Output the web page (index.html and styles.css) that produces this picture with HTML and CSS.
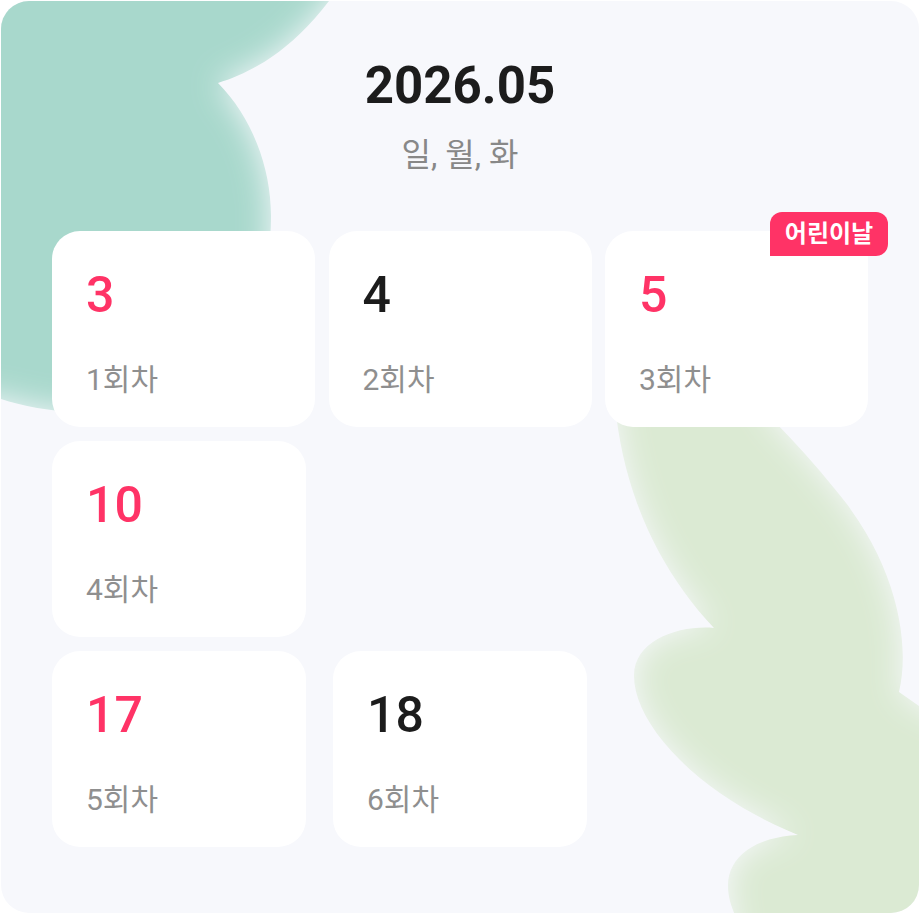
FILE: index.html
```html
<!DOCTYPE html>
<html lang="ko">
<head>
    <meta charset="UTF-8">
    <meta name="viewport" content="width=device-width, initial-scale=1.0">
    <title>2026.05</title>
    <link rel="stylesheet" href="styles.css">
</head>
<body>
    <div class="panel">
        <!-- soft background blobs -->
        <svg class="blobs" width="918" height="912" viewBox="0 0 918 912">
            <defs>
                <filter id="soft" filterUnits="userSpaceOnUse" x="-200" y="-200" width="1400" height="1400">
                    <feGaussianBlur in="SourceAlpha" stdDeviation="16" result="b"/>
                    <feComposite in="SourceGraphic" in2="b" operator="in"/>
                </filter>
            </defs>
            <path filter="url(#soft)" fill="#a8d8cc"
                  d="M -80 -80 L 360 -80 C 350 -30, 340 -15, 328 0 C 290 50, 250 72, 217 82 C 250 115, 270 165, 270 215 C 270 330, 200 420, 80 412 C 50 410, 20 405, 0 398 L -80 390 Z"/>
            <path filter="url(#soft)" fill="#dbead3"
                  d="M 612 360 C 612 470, 650 560, 713 627 C 680 624, 633 638, 633 675 C 633 720, 690 790, 797 834 C 755 836, 727 855, 727 885 C 727 895, 730 905, 734 914 L 734 1000 L 1000 1000 L 1000 740 L 918 705 L 898 691 C 910 640, 895 560, 833 487 C 815 465, 795 442, 773 420 L 740 360 Z"/>
        </svg>

        <div class="content">
            <h1 class="month">2026.05</h1>
            <p class="days">일, 월, 화</p>

            <div class="week week-first">
                <div class="day-card">
                    <div class="date red">3</div>
                    <div class="round">1회차</div>
                </div>
                <div class="day-card">
                    <div class="date">4</div>
                    <div class="round">2회차</div>
                </div>
                <div class="day-card">
                    <span class="holiday">어린이날</span>
                    <div class="date red">5</div>
                    <div class="round">3회차</div>
                </div>
            </div>

            <div class="week">
                <div class="day-card">
                    <div class="date red">10</div>
                    <div class="round">4회차</div>
                </div>
            </div>

            <div class="week">
                <div class="day-card">
                    <div class="date red">17</div>
                    <div class="round">5회차</div>
                </div>
                <div class="day-card">
                    <div class="date">18</div>
                    <div class="round">6회차</div>
                </div>
            </div>
        </div>
    </div>
</body>
</html>
```

FILE: styles.css
```css
body {
    margin: 0;
    padding: 1px;
    background: #ffffff;
    font-family: Roboto, "Noto Sans CJK KR", sans-serif;
}
.panel {
    position: relative;
    width: 918px;
    height: 912px;
    background-color: #f7f8fc;
    border-radius: 28px;
    overflow: hidden;
}
.blobs {
    position: absolute;
    left: 0;
    top: 0;
}
.content {
    position: relative;
    padding: 55px 0 0 51px;
}
.month {
    margin: 0;
    padding-right: 51px;
    font-size: 51px;
    line-height: 60px;
    font-weight: 700;
    color: #1c1c1c;
    text-align: center;
}
.days {
    margin: 19px 0 0;
    padding-right: 51px;
    font-size: 32px;
    line-height: 40px;
    color: #888888;
    text-align: center;
}
.week {
    display: flex;
    gap: 27px;
    margin-top: 14px;
}
.week-first {
    gap: 13.5px;
    margin-top: 56px;
}
.day-card {
    position: relative;
    box-sizing: border-box;
    width: 254px;
    height: 196px;
    padding: 34px 0 0 34px;
    background: #ffffff;
    border-radius: 28px;
}
.week-first .day-card {
    width: 263px;
}
.date {
    font-size: 50px;
    line-height: 60px;
    font-weight: 500;
    color: #1c1c1c;
}
.date.red {
    color: #ff3366;
}
.round {
    margin-top: 37px;
    font-size: 30px;
    line-height: 36px;
    color: #8f8f8f;
}
.holiday {
    position: absolute;
    top: -19px;
    right: -20px;
    width: 118px;
    height: 44px;
    box-sizing: border-box;
    background: #ff3366;
    color: #ffffff;
    border-radius: 12px 12px 12px 0;
    font-size: 24px;
    font-weight: 700;
    line-height: 44px;
    text-align: center;
}
```
